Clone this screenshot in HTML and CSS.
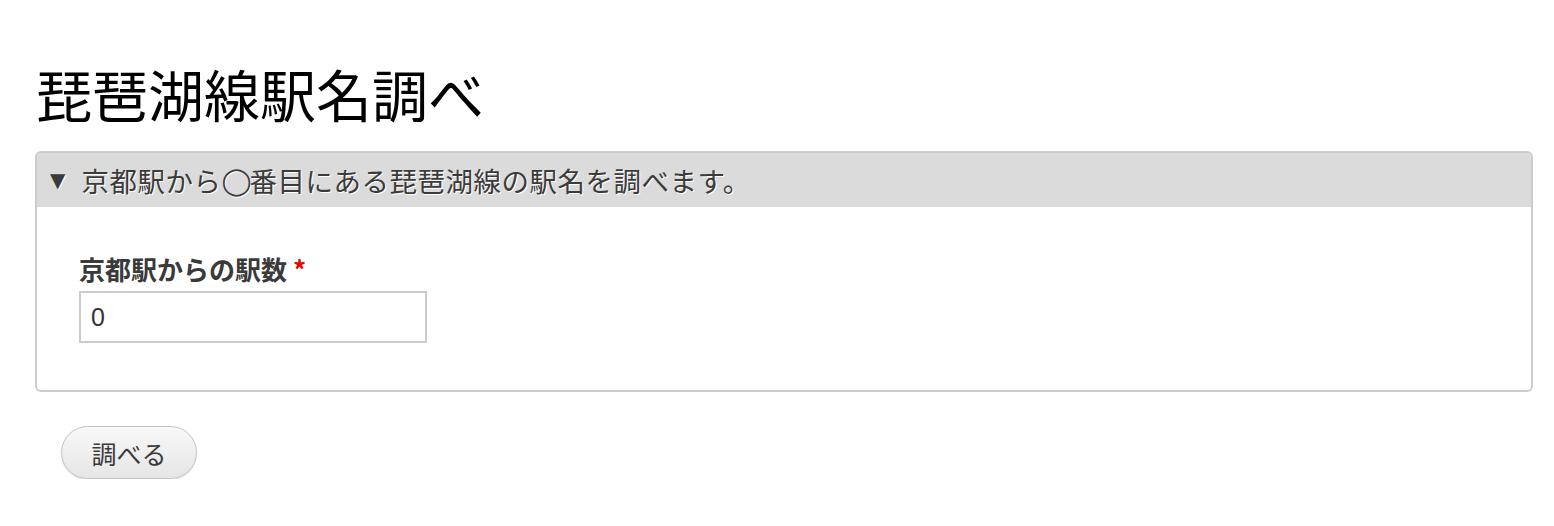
FILE: index.html
```html
<!DOCTYPE html>
<html lang="ja">
<head>
<meta charset="utf-8">
<title>琵琶湖線駅名調べ</title>
<link rel="stylesheet" href="styles.css">
</head>
<body>
<main class="page">
  <h1 class="title">琵琶湖線駅名調べ</h1>
  <form class="form">
    <section class="fieldset">
      <div class="legend"><span class="arrow">▼</span> 京都駅から<span class="circle">◯</span>番目にある琵琶湖線の駅名を調べます。</div>
      <div class="fieldset-body">
        <label class="label" for="num">京都駅からの駅数 <span class="req">*</span></label>
        <input class="text-input" id="num" type="text" value="0">
      </div>
    </section>
    <div class="actions">
      <button class="button" type="button">調べる</button>
    </div>
  </form>
</main>
</body>
</html>
```

FILE: styles.css
```css
html, body {
  margin: 0;
  padding: 0;
  background: #fff;
}
body {
  font-family: "Noto Sans CJK JP", "Noto Sans", sans-serif;
  color: #333;
}
.page {
  padding: 0 21px 0 35px;
}
.title {
  margin: 0;
  padding-top: 55px;
  padding-left: 1px;
  font-size: 56px;
  line-height: 76px;
  font-weight: normal;
  color: #000;
}
.form {
  margin-top: 20px;
}
.fieldset {
  border: 2px solid #cccccc;
  border-radius: 6px;
  background: #fff;
  overflow: hidden;
}
.legend {
  background: #dbdbdb;
  height: 54px;
  display: flex;
  align-items: center;
  padding-left: 13px;
  font-size: 27.5px;
  letter-spacing: 0.5px;
  color: #3b3b3b;
  text-shadow: 1px 1px 0 #fff;
  white-space: pre;
}
.arrow {
  font-family: "DejaVu Sans", sans-serif;
  font-size: 20px;
  margin-right: 9px;
}
.circle {
  display: inline-block;
  width: 28px;
  text-align: center;
  font-family: "DejaVu Sans", sans-serif;
  font-size: 27px;
  line-height: 1;
}
.fieldset-body {
  padding: 42px 42px 47px;
  display: flex;
  flex-direction: column;
  align-items: flex-start;
}
.label {
  font-size: 26px;
  font-weight: bold;
  color: #3a3a3a;
  line-height: 40px;
  margin-bottom: 2px;
}
.req {
  color: #e00;
}
.text-input {
  box-sizing: border-box;
  width: 348px;
  height: 52px;
  border: 2px solid #cccccc;
  padding: 0 10px;
  font-family: "Liberation Sans", Arial, sans-serif;
  font-size: 25px;
  color: #333;
  background: #fff;
  outline: none;
}
.actions {
  padding: 34px 0 0 26px;
}
.button {
  box-sizing: border-box;
  width: 136px;
  height: 53px;
  border: 1px solid #c4c4c4;
  border-radius: 27px;
  background: linear-gradient(#f8f8f8, #e6e6e6);
  box-shadow: 0 1px 1px rgba(0,0,0,0.15);
  font-family: "Noto Sans CJK JP", sans-serif;
  font-size: 25px;
  color: #3a3a3a;
  padding: 0;
  cursor: pointer;
}
```
